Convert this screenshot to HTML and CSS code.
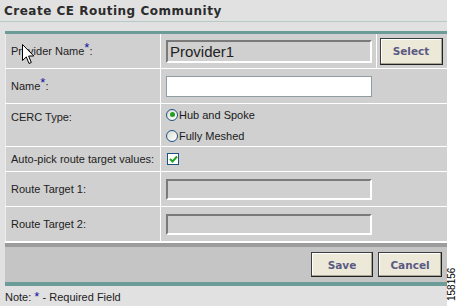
FILE: index.html
```html
<!DOCTYPE html>
<html lang="en">
<head>
<meta charset="UTF-8">
<title>Create CE Routing Community</title>
<link rel="stylesheet" href="styles.css">
</head>
<body>

<div class="page">
  <h1 class="title">Create CE Routing Community</h1>

  <table class="form">
    <tr class="r-provider">
      <td class="lbl">Provider Name<span class="req">*</span>:</td>
      <td class="fld"><input class="txt ro big" value="Provider1" readonly></td>
      <td class="sel"><button class="btn">Select</button></td>
    </tr>
    <tr class="r-name">
      <td class="lbl">Name<span class="req">*</span>:</td>
      <td class="fld" colspan="2"><input class="txt"></td>
    </tr>
    <tr class="r-cerc">
      <td class="lbl top">CERC Type:</td>
      <td class="fld" colspan="2">
        <label class="opt"><span class="radio on"></span>Hub and Spoke</label>
        <label class="opt"><span class="radio"></span>Fully Meshed</label>
      </td>
    </tr>
    <tr class="r-auto">
      <td class="lbl">Auto-pick route target values:</td>
      <td class="fld" colspan="2">
        <span class="check">
          <svg width="9" height="8" viewBox="0 0 9 8"><path d="M1 4 L3.5 6.5 L8 1.5" fill="none" stroke="#21a121" stroke-width="2"/></svg>
        </span>
      </td>
    </tr>
    <tr class="r-rt">
      <td class="lbl">Route Target 1:</td>
      <td class="fld" colspan="2"><input class="txt ro"></td>
    </tr>
    <tr class="r-rt">
      <td class="lbl">Route Target 2:</td>
      <td class="fld" colspan="2"><input class="txt ro"></td>
    </tr>
  </table>

  <div class="actions">
    <button class="btn">Save</button>
    <button class="btn">Cancel</button>
  </div>

  <p class="note">Note: <span class="req">*</span> - Required Field</p>

  <!-- puntero del ratón sobre la etiqueta -->
  <svg class="cursor" width="13" height="21" viewBox="0 0 13 21">
    <path d="M0.5 0.5 L0.5 16.5 L4.3 12.9 L7 19.5 L9.3 18.5 L6.6 12 L11.8 12 Z" fill="#fff" stroke="#000" stroke-width="1"/>
  </svg>
</div>

<div class="side"><span>158156</span></div>

</body>
</html>
```

FILE: styles.css
```css
:root{
  --page:   #e1e1e1;
  --cell:   #d0d0d0;
  --bar:    #c5c5c5;
  --teal:   #6c9c98;
  --btn-bg: #ece9d8;
  --btn-fg: #5a5a84;
  --req:    #1010a0;
}
*{box-sizing:border-box;margin:0;padding:0}
body{
  display:flex;
  background:#fff;
  font-family:'Liberation Sans',Arial,sans-serif;
  font-size:11px;
  color:#1a1a1a;
  height:306px;
  overflow:hidden;
}
.page{
  position:relative;
  width:447px;
  background:var(--page);
}

/* ---------- Titulo ------------- */
.title{
  font-family:'DejaVu Sans',Verdana,sans-serif;
  font-size:12px;
  font-weight:bold;
  letter-spacing:0.5px;
  color:#2c2c2c;
  padding:4px 0 0 4px;
  height:22px;
  border-bottom:1px solid #b7c9c7;
  margin-bottom:9px;
}

/* ---------- Tabla -------------- */
.form{
  margin-left:5px;
  width:442px;
  border-collapse:collapse;
  border-top:3px solid var(--teal);
  border-left:1px solid #ececec;
  background:var(--cell);
}
.form td{
  border-bottom:1px solid #fff;
  padding:0;
  vertical-align:middle;
}
.lbl{
  width:155px;
  padding-left:5px !important;
  border-right:1px solid #fff;
  color:#222;
}
.lbl.top{vertical-align:top !important;padding-top:7px !important}
.fld{padding-left:5px !important}
.sel{width:71px;border-left:1px solid #fff;padding-left:3px !important}
.req{color:var(--req);font-size:13px;vertical-align:3px;line-height:0}

.r-provider td{height:36px}
.r-name td{height:35px}
.r-cerc td{height:43px}
.r-auto td{height:25px}
.r-rt td{height:35px}

.txt{
  display:block;
  width:206px;
  height:21px;
  border:1px solid #8f9ca2;
  background:#fff;
  font-family:'Liberation Sans',Arial,sans-serif;
}
.txt.ro{
  background:var(--cell);
  border:2px solid;
  border-color:#7a7a7a #fff #fff #7a7a7a;
}
.txt.big{height:23px;font-size:15px;color:#222;padding-left:2px}

.opt{display:flex;align-items:center;height:21px;gap:1px}
.radio{
  width:12px;height:12px;
  border-radius:50%;
  border:1px solid #1c5180;
  background:linear-gradient(135deg,#dcdcd4,#fff);
  display:flex;align-items:center;justify-content:center;
}
.radio.on::after{
  content:"";
  width:5px;height:5px;border-radius:50%;
  background:#21a121;
}
.check{
  display:flex;align-items:center;justify-content:center;
  width:12px;height:12px;margin-left:1px;
  border:1px solid #1c5180;
  background:#fff;
}

/* ---------- Botones ------------ */
.btn{
  font-family:'DejaVu Sans',Verdana,sans-serif;
  font-size:10.5px;
  font-weight:bold;
  color:var(--btn-fg);
  background:var(--btn-bg);
  border:1px solid #3d3d3d;
  border-right-color:#222;border-bottom-color:#222;
  box-shadow:inset -1px -1px 0 #a7a595, inset 1px 1px 0 #fff;
}
.sel .btn{width:63px;height:27px}

.actions{
  margin-left:5px;
  width:442px;
  height:44px;
  border-top:1px solid #fff;
  border-bottom:4px solid var(--teal);
  background:var(--bar);
  box-shadow:inset 0 4px 0 #9c9c9c;
  display:flex;
  justify-content:flex-end;
  align-items:flex-start;
  gap:5px;
  padding:9px 5px 0 0;
}
.actions .btn{width:62px;height:25px}
.actions .btn + .btn{width:64px}

.note{
  padding:5px 0 0 5px;
  color:#222;
}
.note .req{font-size:13px;vertical-align:0}

.cursor{position:absolute;left:22px;top:44px}

/* ---------- Lateral ------------ */
.side{
  flex:1;
  position:relative;
}
.side span{
  position:absolute;
  left:0;top:301px;
  transform-origin:0 0;
  transform:rotate(-90deg);
  font-family:'Liberation Sans',Arial,sans-serif;
  font-size:10px;
  color:#000;
  line-height:10px;
}
```
